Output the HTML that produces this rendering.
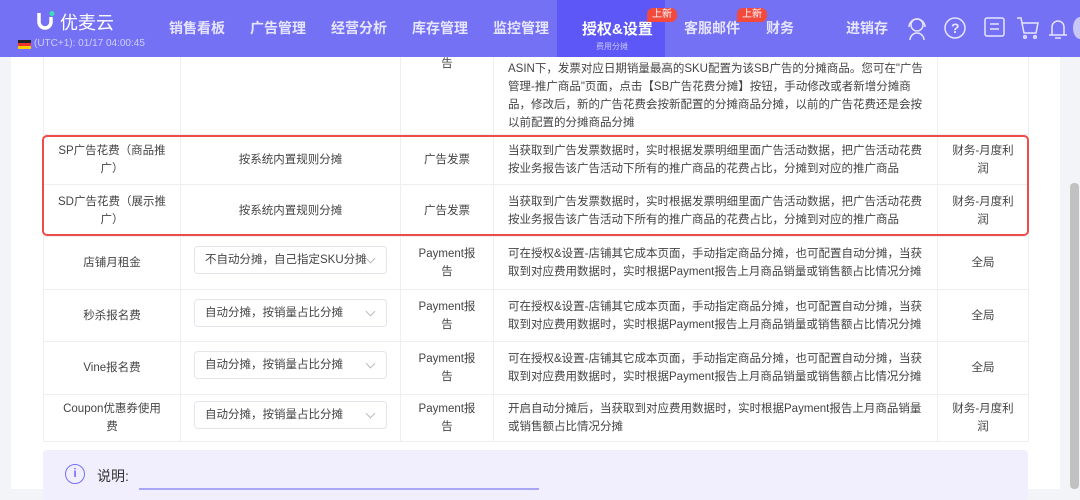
<!DOCTYPE html>
<html><head><meta charset="utf-8"><style>
*{margin:0;padding:0;box-sizing:border-box}
body{width:1080px;height:489px;overflow:hidden;background:#f3f4f8;font-family:"Liberation Sans","Noto Sans CJK SC",sans-serif;font-size:12px;color:#333;position:relative}
.nav{position:absolute;left:0;top:0;width:1080px;height:57px;background:#7571f4;z-index:2}
.nav .it{position:absolute;top:18px;color:#e6e5ff;font-size:14px;font-weight:bold}
.act{position:absolute;left:557px;top:0;width:108px;height:57px;background:#5c57f6}
.badge{position:absolute;top:8px;height:14px;padding:0 5px;background:#f24a3d;color:#fff;font-size:10px;line-height:14px;border-radius:6px 6px 6px 0}
.main{position:absolute;left:11px;top:57px;width:1049px;height:432px;background:#fff}
.sb{position:absolute;left:1070px;top:183px;width:9px;height:306px;background:#c1c1c1;border-radius:4px}
table{position:absolute;left:43px;border-collapse:collapse;width:985px;table-layout:fixed;font-size:11.5px}
td{border:1px solid #eceef2;text-align:center;line-height:18px;color:#444;padding:0 6px;white-space:nowrap;overflow:hidden}
td.d{text-align:left;padding:0 0 0 14px}
.sel{display:inline-block;width:193px;height:28px;border:1px solid #e3e5ea;border-radius:4px;text-align:left;padding:0 10px;line-height:26px;position:relative;overflow:hidden}
.sel:after{content:"";position:absolute;right:12px;top:8px;width:6px;height:6px;border-right:1px solid #bbb;border-bottom:1px solid #bbb;transform:rotate(45deg)}
.red{position:absolute;left:42px;top:135px;width:987px;height:101px;border:2px solid #ef4b4b;border-radius:5px}
.info{position:absolute;left:43px;top:450px;width:985px;height:50px;background:#f1effe;border-radius:4px}
</style></head><body>
<div class="nav">
<div class="act"></div>
<svg style="position:absolute;left:36px;top:10px" width="20" height="20"><path d="M3 3v9a6 6 0 0 0 12 0V7" stroke="#fff" stroke-width="3.5" fill="none"/><circle cx="16" cy="3.5" r="2.5" fill="#3ce0b0"/></svg>
<div style="position:absolute;left:60px;top:9px;color:#fff;font-size:18px">优麦云</div>
<div style="position:absolute;left:18px;top:40px;width:13px;height:9px;background:linear-gradient(#222 33%,#e33 33% 66%,#fc0 66%)"></div>
<div style="position:absolute;left:34px;top:38px;color:#cfcdfc;font-size:10px">(UTC+1): 01/17 04:00:45</div>
<div class="it" style="left:169px">销售看板</div>
<div class="it" style="left:250px">广告管理</div>
<div class="it" style="left:331px">经营分析</div>
<div class="it" style="left:412px">库存管理</div>
<div class="it" style="left:493px">监控管理</div>
<div class="it" style="left:582px;color:#fff;font-size:15px">授权&amp;设置</div>
<div style="position:absolute;left:596px;top:41px;color:#c8c5fb;font-size:8px">费用分摊</div>
<div class="badge" style="left:647px">上新</div>
<div class="it" style="left:684px">客服邮件</div>
<div class="badge" style="left:737px">上新</div>
<div class="it" style="left:766px">财务</div>
<div class="it" style="left:846px">进销存</div>
<svg style="position:absolute;left:905px;top:16px" width="170" height="26" fill="none" stroke="#e6e5ff" stroke-width="1.5">
<circle cx="12" cy="9" r="6"/><path d="M4 11a8 8 0 0 1 16 0M5 24a7 7 0 0 1 14 0"/>
<circle cx="50" cy="12" r="10"/><text x="46" y="17" fill="#e6e5ff" stroke="none" font-size="14" font-weight="bold">?</text>
<rect x="80" y="2" width="19" height="18" rx="2"/><path d="M85 8h9M85 13h9"/>
<path d="M112 2h4l3 15h12l2-10h-16"/><circle cx="120" cy="21" r="1.3"/><circle cx="130" cy="21" r="1.3"/>
<path d="M147 19V11a6 6 0 0 1 12 0v8zM144 19h18M150 22h6"/>
</svg>
<div style="position:absolute;left:1073px;top:17px;width:14px;height:22px;border-radius:50%;background:#c9c7f8"></div>
</div>
<div class="main"></div>
<div class="sb"></div>
<table style="top:44px">
<colgroup><col style="width:137px"><col style="width:220px"><col style="width:93px"><col style="width:444px"><col style="width:91px"></colgroup>
<tr style="height:90px"><td></td><td></td><td style="vertical-align:top;padding-top:10px">告</td><td class="d" style="vertical-align:top;padding-top:15px">ASIN下，发票对应日期销量最高的SKU配置为该SB广告的分摊商品。您可在"广告<br>管理-推广商品"页面，点击【SB广告花费分摊】按钮，手动修改或者新增分摊商<br>品，修改后，新的广告花费会按新配置的分摊商品分摊，以前的广告花费还是会按<br>以前配置的分摊商品分摊</td><td></td></tr>
<tr style="height:50px"><td>SP广告花费（商品推<br>广）</td><td>按系统内置规则分摊</td><td>广告发票</td><td class="d">当获取到广告发票数据时，实时根据发票明细里面广告活动数据，把广告活动花费<br>按业务报告该广告活动下所有的推广商品的花费占比，分摊到对应的推广商品</td><td>财务-月度利<br>润</td></tr>
<tr style="height:52px"><td>SD广告花费（展示推<br>广）</td><td>按系统内置规则分摊</td><td>广告发票</td><td class="d">当获取到广告发票数据时，实时根据发票明细里面广告活动数据，把广告活动花费<br>按业务报告该广告活动下所有的推广商品的花费占比，分摊到对应的推广商品</td><td>财务-月度利<br>润</td></tr>
<tr style="height:53px"><td>店铺月租金</td><td><span class="sel">不自动分摊，自己指定SKU分摊</span></td><td>Payment报<br>告</td><td class="d">可在授权&amp;设置-店铺其它成本页面，手动指定商品分摊，也可配置自动分摊，当获<br>取到对应费用数据时，实时根据Payment报告上月商品销量或销售额占比情况分摊</td><td>全局</td></tr>
<tr style="height:52px"><td>秒杀报名费</td><td><span class="sel">自动分摊，按销量占比分摊</span></td><td>Payment报<br>告</td><td class="d">可在授权&amp;设置-店铺其它成本页面，手动指定商品分摊，也可配置自动分摊，当获<br>取到对应费用数据时，实时根据Payment报告上月商品销量或销售额占比情况分摊</td><td>全局</td></tr>
<tr style="height:53px"><td>Vine报名费</td><td><span class="sel">自动分摊，按销量占比分摊</span></td><td>Payment报<br>告</td><td class="d">可在授权&amp;设置-店铺其它成本页面，手动指定商品分摊，也可配置自动分摊，当获<br>取到对应费用数据时，实时根据Payment报告上月商品销量或销售额占比情况分摊</td><td>全局</td></tr>
<tr style="height:47px"><td>Coupon优惠券使用<br>费</td><td><span class="sel">自动分摊，按销量占比分摊</span></td><td>Payment报<br>告</td><td class="d">开启自动分摊后，当获取到对应费用数据时，实时根据Payment报告上月商品销量<br>或销售额占比情况分摊</td><td>财务-月度利<br>润</td></tr>
</table>
<div class="red"></div>
<div class="info">
<div style="position:absolute;left:22px;top:14px;width:20px;height:20px;border:1.5px solid #7571f4;border-radius:50%;color:#7571f4;text-align:center;font-size:12px;line-height:17px;font-weight:bold">i</div>
<div style="position:absolute;left:54px;top:16px;font-size:14px;color:#333">说明:</div>
<div style="position:absolute;left:96px;top:38px;width:400px;height:2px;background:#a9a5f7"></div>
</div>
</body></html>
